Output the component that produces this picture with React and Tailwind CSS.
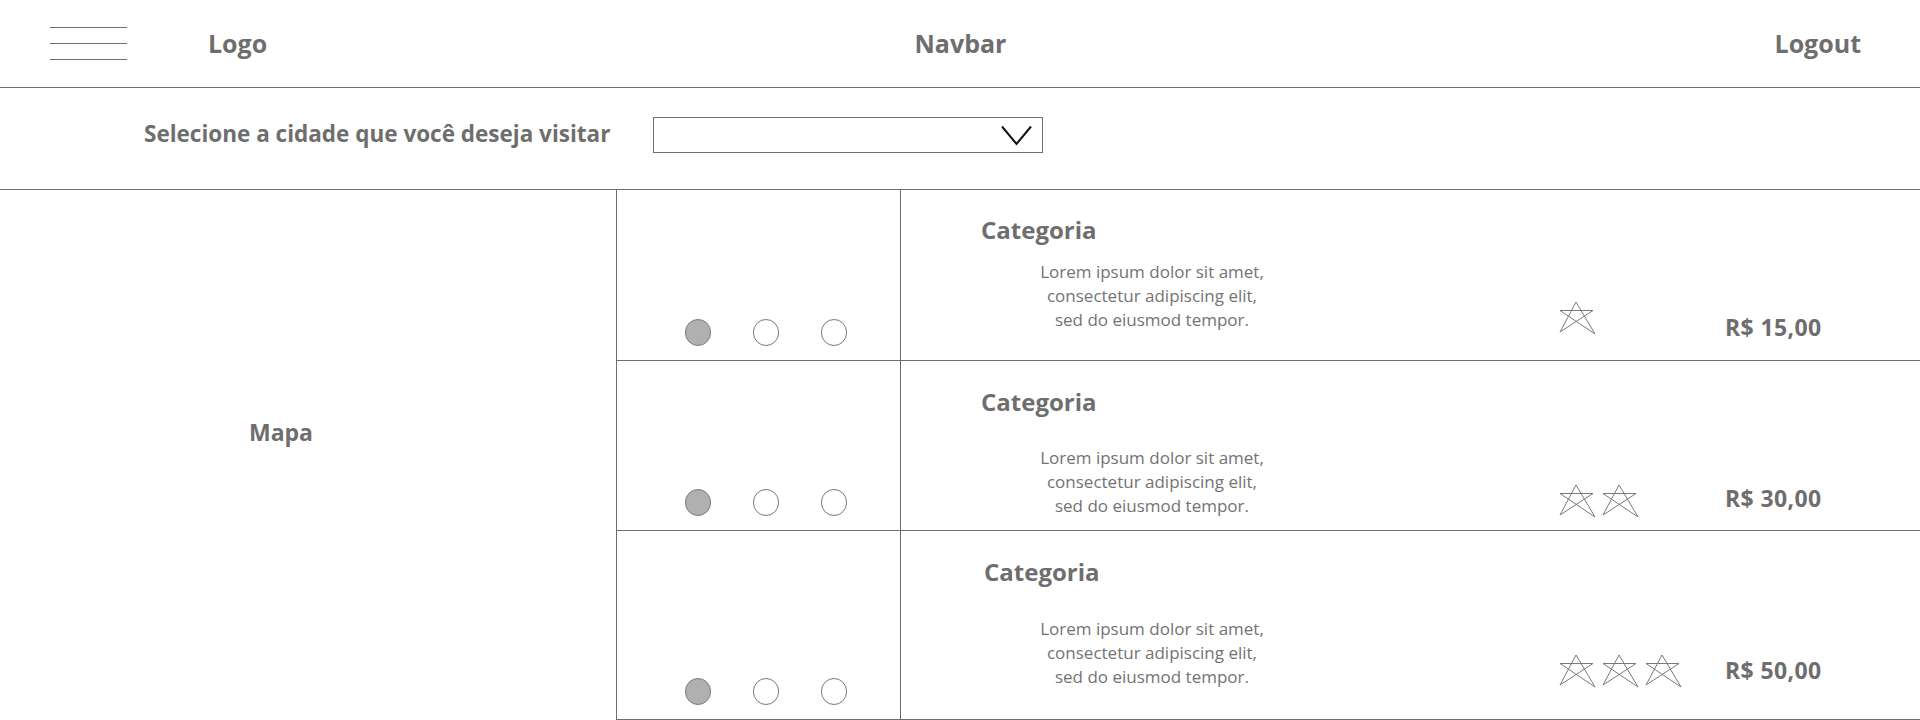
import React from 'react';

const rows = [
  { stars: 1, price: 'R$ 15,00', rowH: 'h-[171px]', catPt: 'pt-[24px]', catPl: 'pl-[80px]', loremMt: 'mt-[14px]', starMt: 'mt-[41px]', priceMt: 'mt-[53px]' },
  { stars: 2, price: 'R$ 30,00', rowH: 'h-[170px]', catPt: 'pt-[25px]', catPl: 'pl-[80px]', loremMt: 'mt-[28px]', starMt: 'mt-[38px]', priceMt: 'mt-[38px]' },
  { stars: 3, price: 'R$ 50,00', rowH: 'h-[189px]', catPt: 'pt-[25px]', catPl: 'pl-[83px]', loremMt: 'mt-[29px]', starMt: 'mt-[37px]', priceMt: 'mt-[39px]' },
];

function Star() {
  return (
    <svg width="37" height="34" viewBox="0 0 37 34" fill="none">
      <polyline
        points="17,1 36,33 1,9.5 34,9.5 1,31 17,1"
        stroke="#7a7a7a"
        strokeWidth="1"
        strokeLinejoin="miter"
      />
    </svg>
  );
}

function Dots() {
  return (
    <div className="flex items-center gap-[42px] pl-[14px]">
      <span className="block w-[26px] h-[27px] rounded-full bg-[#b0b0b0] border border-[#7a7a7a]" />
      <span className="block w-[26px] h-[27px] rounded-full bg-white border border-[#7a7a7a]" />
      <span className="block w-[26px] h-[27px] rounded-full bg-white border border-[#7a7a7a]" />
    </div>
  );
}

export default function App() {
  return (
    <div className="w-[1920px] h-[720px] bg-white text-[#6e6e6e] font-['Open_Sans',sans-serif] overflow-hidden">
      {/* Header */}
      <header className="h-[88px] border-b border-[#6e6e6e] flex items-center">
        <div className="flex-1 flex items-center pl-[50px]">
          <div className="flex flex-col gap-[15px] w-[77px]">
            <span className="block h-px bg-[#6e6e6e]" />
            <span className="block h-px bg-[#6e6e6e]" />
            <span className="block h-px bg-[#6e6e6e]" />
          </div>
          <span className="ml-[81px] text-[25px] font-bold">Logo</span>
        </div>
        <span className="pl-[10px] text-[25px] font-bold">Navbar</span>
        <div className="flex-1 flex justify-end pr-[59px]">
          <span className="text-[25px] font-bold">Logout</span>
        </div>
      </header>

      {/* City select */}
      <section className="h-[102px] border-b border-[#6e6e6e] flex items-start pt-[29px] pl-[144px]">
        <span className="w-[468px] whitespace-nowrap mt-[3px] text-[22.5px] leading-[28px] font-bold">
          Selecione a cidade que você deseja visitar
        </span>
        <div className="ml-[41px] w-[390px] h-[36px] border border-[#6e6e6e] flex items-center justify-end pr-[10px]">
          <svg width="31" height="21" viewBox="0 0 31 21" fill="none">
            <polyline points="1,1.5 15.5,19 30,1.5" stroke="#111" strokeWidth="2" />
          </svg>
        </div>
      </section>

      {/* Main */}
      <main className="flex h-[530px]">
        <div className="w-[617px] border-r border-[#6e6e6e] flex items-center justify-center pr-[54px] pb-[46px]">
          <span className="text-[23px] font-bold">Mapa</span>
        </div>
        <div className="flex-1 flex flex-col">
          {rows.map((r, i) => (
            <div key={i} className={`${r.rowH} border-b border-[#6e6e6e] flex`}>
              <div className="w-[284px] border-r border-[#6e6e6e] flex items-end justify-center pb-[14px]">
                <Dots />
              </div>
              <div className="flex-1 flex flex-col">
                <div className={`${r.catPt} ${r.catPl}`}>
                  <span className="text-[24px] leading-[32px] font-bold">Categoria</span>
                </div>
                <div className={`${r.loremMt} flex items-start`}>
                  <p className="ml-[111px] w-[280px] text-center text-[17px] leading-[24px] text-[#737373]">
                    Lorem ipsum dolor sit amet,
                    <br />
                    consectetur adipiscing elit,
                    <br />
                    sed do eiusmod tempor.
                  </p>
                  <div className={`${r.starMt} ml-[267px] w-[166px] flex items-center gap-[6px]`}>
                    {Array.from({ length: r.stars }).map((_, k) => (
                      <Star key={k} />
                    ))}
                  </div>
                  <span className={`${r.priceMt} text-[23px] leading-[28px] font-bold tracking-[0.4px]`}>
                    {r.price}
                  </span>
                </div>
              </div>
            </div>
          ))}
        </div>
      </main>
    </div>
  );
}
